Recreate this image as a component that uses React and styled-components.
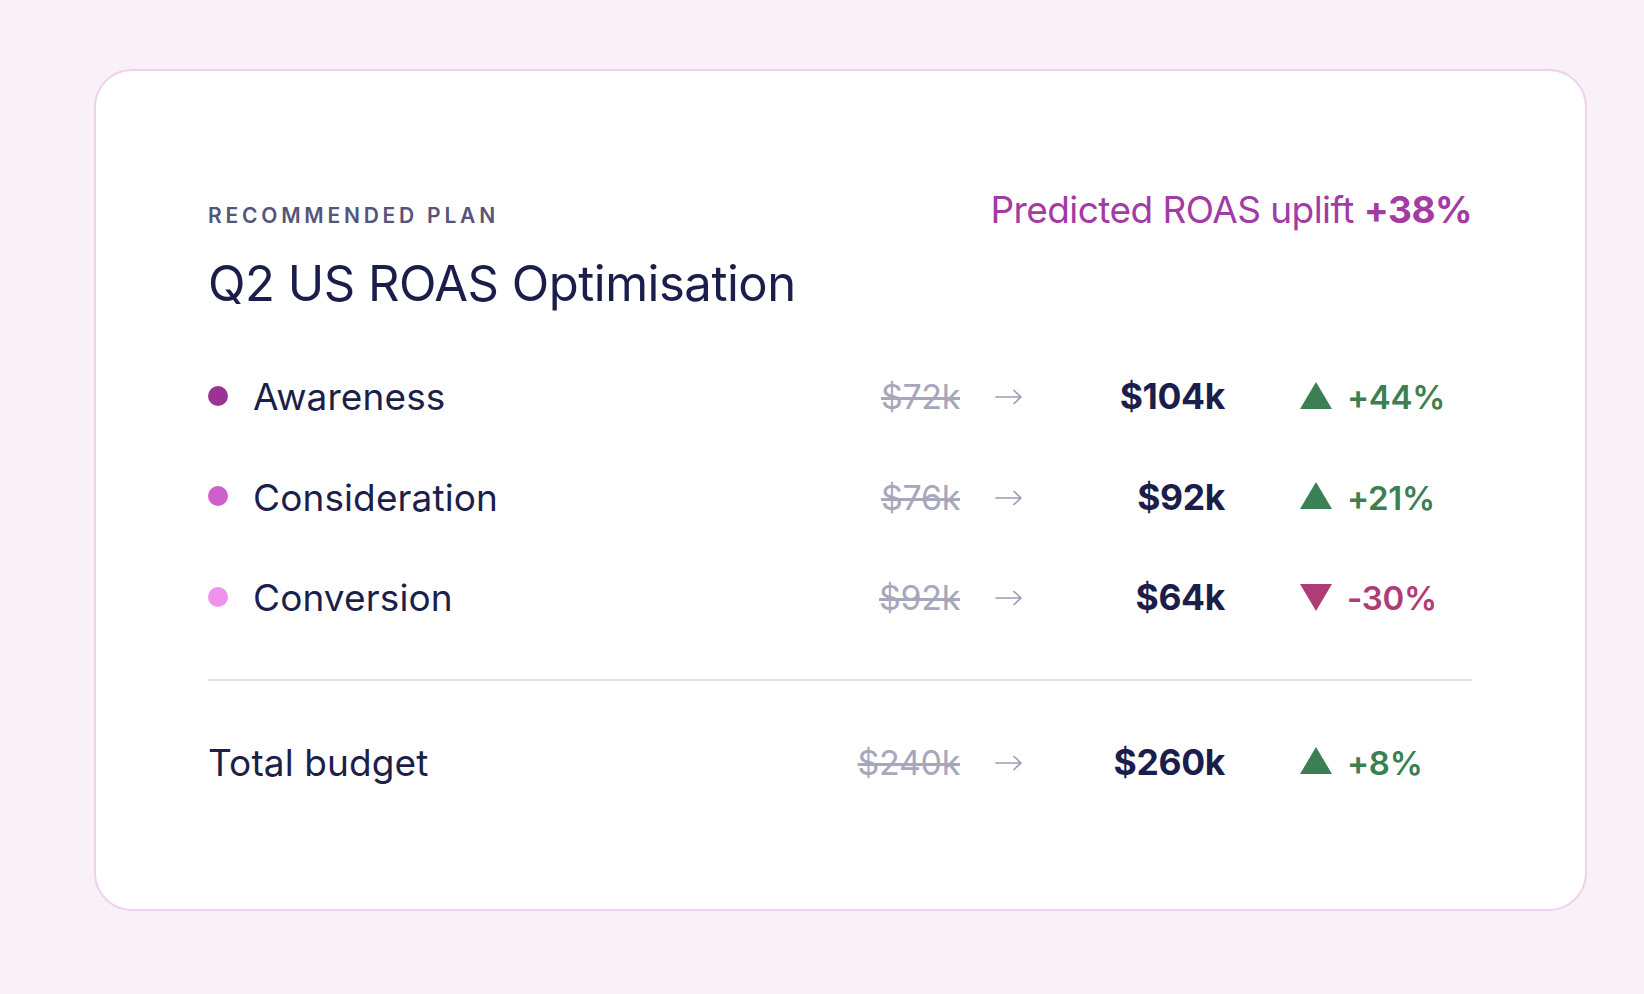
import React from "react";
import styled, { createGlobalStyle } from "styled-components";

const Global = createGlobalStyle`
  html, body { margin: 0; padding: 0; background: #f9f1f8; }
  body { font-family: Inter, "Noto Sans", "Liberation Sans", sans-serif; color: #1c1f4a; }
`;

const Page = styled.div`
  padding: 69px 57px 80px 94px;
  box-sizing: border-box;
  width: 1644px;
`;

const Card = styled.section`
  background: #ffffff;
  border: 2px solid #efd0ee;
  border-radius: 38px;
  padding: 117px 113px 96px 112px;
  display: flex;
  flex-direction: column;
`;

const Header = styled.div`
  display: flex;
  justify-content: space-between;
  align-items: baseline;
  height: 44px;
`;

const Eyebrow = styled.div`
  font-size: 21px;
  font-weight: 600;
  letter-spacing: 0.18em;
  color: #55557a;
  text-transform: uppercase;
`;

const Uplift = styled.div`
  font-size: 37px;
  line-height: 44px;
  color: #a43aa3;
  letter-spacing: -0.015em;
  b { font-weight: 700; }
`;

const Title = styled.h1`
  margin: 24px 0 0;
  font-size: 49px;
  line-height: 56px;
  font-weight: 400;
  letter-spacing: -0.01em;
  color: #1b1e4b;
`;

const List = styled.div`
  margin-top: 35px;
  display: flex;
  flex-direction: column;
`;

const Row = styled.div`
  display: grid;
  grid-template-columns: 1fr 140px 80px 185px 247px;
  align-items: center;
  height: 100.5px;
`;

const Label = styled.div`
  display: flex;
  align-items: center;
  gap: 25px;
  font-size: 37px;
  line-height: 44px;
  color: #1c1f4a;
  letter-spacing: 0.003em;
`;

const Dot = styled.span`
  width: 20px;
  height: 20px;
  border-radius: 50%;
  background: ${(p) => p.$color};
  margin-bottom: 3px;
  flex: none;
`;

const Old = styled.div`
  text-align: right;
  font-size: 34px;
  line-height: 44px;
  color: #a7a7bb;
  text-decoration: line-through;
  text-decoration-thickness: 3px;
  text-decoration-color: #a7a7bb;
  letter-spacing: -0.01em;
`;

const ArrowCell = styled.div`
  padding-left: 35px;
  display: flex;
  align-items: center;
  height: 44px;
`;

const New = styled.div`
  text-align: right;
  font-size: 35.5px;
  line-height: 44px;
  font-weight: 700;
  color: #1b1e4b;
  letter-spacing: -0.01em;
`;

const Delta = styled.div`
  padding-left: 75px;
  display: flex;
  align-items: center;
  gap: 15px;
  font-size: 33px;
  line-height: 44px;
  font-weight: 600;
  letter-spacing: -0.01em;
  color: ${(p) => (p.$up ? "#3b7f52" : "#b13b76")};
  svg { flex: none; margin-bottom: ${(p) => (p.$up ? "4px" : "2px")}; }
`;

const Divider = styled.hr`
  margin: 30px 0 0;
  border: none;
  height: 2px;
  background: #e6e3e6;
`;

const TotalWrap = styled.div`
  margin-top: 32px;
`;

const Arrow = () => (
  <svg width="27" height="16" viewBox="0 0 27 16" fill="none" stroke="#9c9cb4" strokeWidth="1.7" strokeLinecap="round" strokeLinejoin="round">
    <path d="M1 8 H26 M19 1.5 L26 8 L19 14.5" />
  </svg>
);

const Tri = ({ up, color }) => (
  <svg width="32" height="27" viewBox="0 0 32 27">
    {up ? <polygon points="16,0 32,27 0,27" fill={color} /> : <polygon points="0,0 32,0 16,27" fill={color} />}
  </svg>
);

const rows = [
  { name: "Awareness", dot: "#9b3295", old: "$72k", now: "$104k", delta: "+44%", up: true },
  { name: "Consideration", dot: "#cf5fcc", old: "$76k", now: "$92k", delta: "+21%", up: true },
  { name: "Conversion", dot: "#ef92ee", old: "$92k", now: "$64k", delta: "-30%", up: false },
];

const Line = ({ label, dot, old, now, delta, up }) => (
  <Row>
    <Label>
      {dot && <Dot $color={dot} />}
      {label}
    </Label>
    <Old>{old}</Old>
    <ArrowCell>
      <Arrow />
    </ArrowCell>
    <New>{now}</New>
    <Delta $up={up}>
      <Tri up={up} color={up ? "#3b7f52" : "#b13b76"} />
      {delta}
    </Delta>
  </Row>
);

export default function App() {
  return (
    <>
      <Global />
      <Page>
        <Card>
          <Header>
            <Eyebrow>Recommended plan</Eyebrow>
            <Uplift>
              Predicted ROAS uplift <b>+38%</b>
            </Uplift>
          </Header>
          <Title>Q2 US ROAS Optimisation</Title>
          <List>
            {rows.map((r) => (
              <Line key={r.name} label={r.name} dot={r.dot} old={r.old} now={r.now} delta={r.delta} up={r.up} />
            ))}
          </List>
          <Divider />
          <TotalWrap>
            <Line label="Total budget" old="$240k" now="$260k" delta="+8%" up />
          </TotalWrap>
        </Card>
      </Page>
    </>
  );
}
